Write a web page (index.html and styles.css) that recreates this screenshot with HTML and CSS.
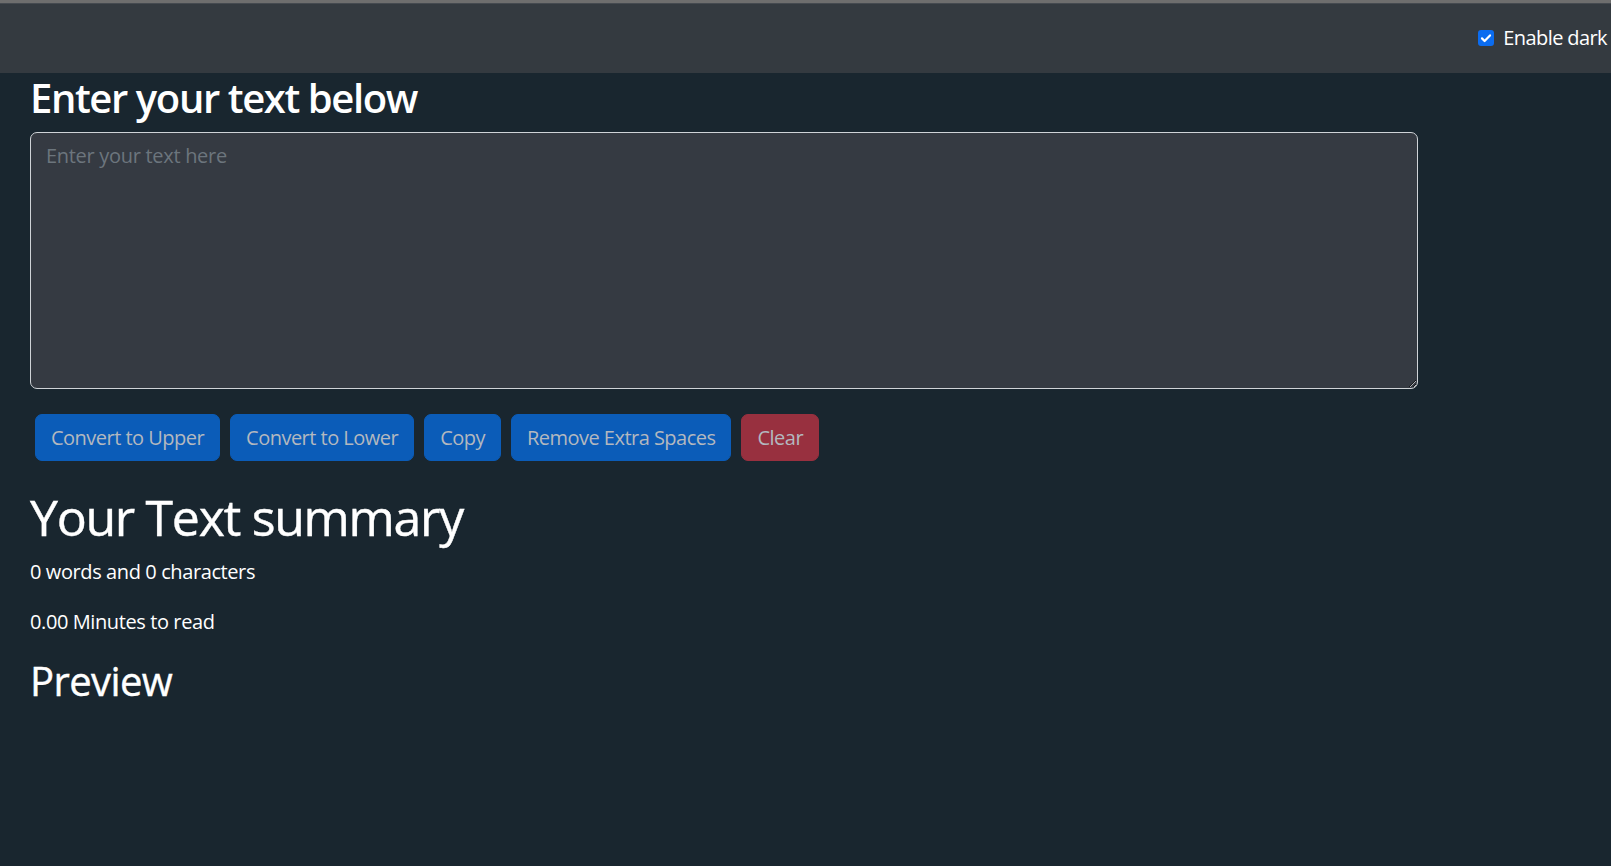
FILE: index.html
```html
<!DOCTYPE html>
<html lang="en">
<head>
<meta charset="utf-8">
<title>TextUtils</title>
<link rel="stylesheet" href="styles.css">
</head>
<body>
  <nav class="navbar">
    <div class="form-check">
      <span class="check-box">
        <svg viewBox="0 0 16 16" width="16" height="16"><path d="M4 8.4l2.6 2.6L12 5.4" fill="none" stroke="#fff" stroke-width="2.2" stroke-linecap="round" stroke-linejoin="round"/></svg>
      </span>
      <label class="check-label">Enable dark</label>
    </div>
  </nav>
  <main class="container">
    <h2 class="title">Enter your text below</h2>
    <textarea class="text-input" placeholder="Enter your text here"></textarea>
    <div class="btn-row">
      <button class="btn btn-primary">Convert to Upper</button>
      <button class="btn btn-primary">Convert to Lower</button>
      <button class="btn btn-primary">Copy</button>
      <button class="btn btn-primary">Remove Extra Spaces</button>
      <button class="btn btn-danger">Clear</button>
    </div>
    <section class="summary">
      <h1 class="summary-title">Your Text summary</h1>
      <p class="stat">0 words and 0 characters</p>
      <p class="stat">0.00 Minutes to read</p>
      <h2 class="preview-title">Preview</h2>
    </section>
  </main>
</body>
</html>
```
FILE: styles.css
```css
* { box-sizing: border-box; }

html, body {
  margin: 0;
  padding: 0;
  background: #19262f;
  color: #fff;
  font-family: "Open Sans", "Noto Sans", "Liberation Sans", sans-serif;
  font-size: 20px;
  line-height: 1.5;
  overflow: hidden;
}

.navbar {
  height: 73px;
  background: #343a40;
  border-top: 3px solid #6e6e6e;
  box-shadow: inset 0 1px 0 #454a50;
  display: flex;
  align-items: center;
  justify-content: flex-end;
  padding-right: 4px;
}

.form-check {
  display: flex;
  align-items: center;
  gap: 9px;
}

.check-box {
  width: 16px;
  height: 16px;
  border-radius: 3px;
  background: #0b6cf0;
  display: flex;
  align-items: center;
  justify-content: center;
}

.check-box svg { display: block; }

.check-label {
  font-size: 20px;
  line-height: 30px;
  color: #fff;
  white-space: nowrap;
  letter-spacing: -0.6px;
}

.container {
  padding: 0 30px;
  width: 1448px;
}

.title {
  margin: 1px 0 10px;
  font-size: 40px;
  line-height: 48px;
  font-weight: 600;
  letter-spacing: -1.4px;
}

.text-input {
  display: block;
  width: 100%;
  height: 257px;
  margin: 0 0 20px;
  padding: 7.5px 15px;
  background: #353a42;
  border: 1px solid #cfd3d7;
  border-radius: 7px;
  color: #fff;
  font-family: inherit;
  font-size: 20px;
  line-height: 30px;
  resize: vertical;
  outline: none;
}

.text-input::placeholder {
  color: #6c757d;
  letter-spacing: -0.3px;
}

.btn-row {
  display: flex;
  flex-wrap: wrap;
}

.btn {
  margin: 5px;
  padding: 7.5px 15px;
  border: 1px solid transparent;
  border-radius: 7px;
  font-family: inherit;
  font-size: 20px;
  line-height: 30px;
  color: #b3b8bf;
  letter-spacing: -0.52px;
  cursor: pointer;
}

.btn-primary {
  background: #0b5cb8;
  border-color: #0b5cb8;
}

.btn-danger {
  background: #98303f;
  border-color: #98303f;
}

.summary {
  margin-top: 21px;
}

.summary-title {
  margin: 0 0 10px;
  font-size: 50px;
  line-height: 60px;
  font-weight: 500;
  letter-spacing: -1.3px;
  -webkit-text-stroke: 0.4px #fff;
}

.stat {
  margin: 0 0 20px;
  font-size: 20px;
  line-height: 30px;
  letter-spacing: -0.4px;
}

.preview-title {
  margin: 0;
  font-size: 40px;
  line-height: 48px;
  font-weight: 500;
  letter-spacing: -0.6px;
  -webkit-text-stroke: 0.4px #fff;
}
```
